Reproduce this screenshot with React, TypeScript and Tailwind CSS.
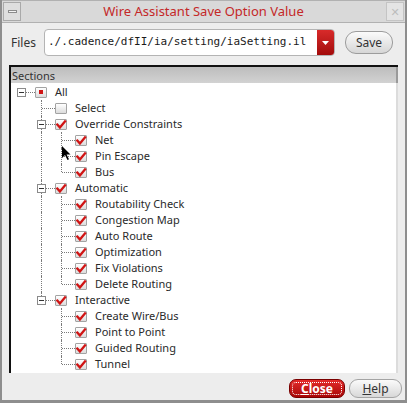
import React from 'react'

type TreeNode = {
  label: string
  state: 'checked' | 'partial' | 'unchecked'
  children?: TreeNode[]
}

type Row = {
  node: TreeNode
  level: number
  guides: boolean[]
  isLast: boolean
}

const c = (label: string): TreeNode => ({ label, state: 'checked' })

const sections: TreeNode = {
  label: 'All',
  state: 'partial',
  children: [
    { label: 'Select', state: 'unchecked' },
    {
      label: 'Override Constraints',
      state: 'checked',
      children: [c('Net'), c('Pin Escape'), c('Bus')],
    },
    {
      label: 'Automatic',
      state: 'checked',
      children: [
        c('Routability Check'),
        c('Congestion Map'),
        c('Auto Route'),
        c('Optimization'),
        c('Fix Violations'),
        c('Delete Routing'),
      ],
    },
    {
      label: 'Interactive',
      state: 'checked',
      children: [
        c('Create Wire/Bus'),
        c('Point to Point'),
        c('Guided Routing'),
        c('Tunnel'),
      ],
    },
  ],
}

// flatten the tree into rows, remembering which ancestor columns need a line
const flatten = (
  node: TreeNode,
  level: number,
  guides: boolean[],
  isLast: boolean,
  out: Row[]
) => {
  out.push({ node, level, guides, isLast })
  const kids = node.children ?? []
  kids.forEach((kid, i) => {
    const childGuides = level === 0 ? [] : [...guides, !isLast]
    flatten(kid, level + 1, level === 0 ? [false] : childGuides, i === kids.length - 1, out)
  })
}

const rows: Row[] = []
flatten(sections, 0, [], true, rows)

const Checkbox = ({ state }: { state: TreeNode['state'] }) => (
  <div className="relative w-[12px] h-[11px] shrink-0 rounded-[1px] border border-[#a3a3a3] bg-gradient-to-b from-[#ffffff] to-[#dcdcdc]">
    {state === 'checked' && (
      <svg
        width="12"
        height="11"
        viewBox="0 0 12 11"
        className="absolute left-[-1px] top-[-1px]"
      >
        <path
          d="M2.3 5.6 L4.9 8.4 L10 2.4"
          fill="none"
          stroke="#d01414"
          strokeWidth="2.3"
          strokeLinecap="square"
        />
      </svg>
    )}
    {state === 'partial' && (
      <div className="absolute left-[3px] top-[2.5px] w-[4px] h-[4px] bg-[#d01414]" />
    )}
  </div>
)

const Expander = () => (
  <div className="absolute left-[6px] top-[4px] w-[9px] h-[9px] bg-white border border-[#8a8a8a] flex items-center justify-center">
    <div className="w-[5px] h-px bg-[#333]" />
  </div>
)

const TreeRow = ({ row }: { row: Row }) => {
  const { node, level, guides, isLast } = row
  const hasKids = !!node.children?.length
  return (
    <div className="flex h-4 items-center">
      {guides.map((g, i) => (
        <div key={i} className="relative w-5 h-4 shrink-0">
          {g && (
            <div className="absolute left-[10px] top-0 h-4 border-l border-dotted border-[#7a7a7a]" />
          )}
        </div>
      ))}
      <div className="relative w-6 h-4 shrink-0">
        {level > 0 && (
          <div
            className={
              isLast
                ? 'absolute left-[10px] top-0 h-2 border-l border-dotted border-[#7a7a7a]'
                : 'absolute left-[10px] top-0 h-4 border-l border-dotted border-[#7a7a7a]'
            }
          />
        )}
        <div className="absolute left-[11px] top-[8px] w-[13px] border-t border-dotted border-[#7a7a7a]" />
        {hasKids && <Expander />}
      </div>
      <Checkbox state={node.state} />
      <span className="ml-2 text-[11px] leading-4 text-[#2a2a2a] whitespace-nowrap">
        {node.label}
      </span>
    </div>
  )
}

export default function App() {
  return (
    <div
      className="relative w-[407px] h-[403px] bg-[#ededed] border-l-2 border-r-2 border-b-[3px] border-[#8e8e8e] flex flex-col overflow-hidden"
      style={{ fontFamily: '"Noto Sans", "DejaVu Sans", sans-serif' }}
    >
      {/* title bar */}
      <div className="h-[23px] shrink-0 flex items-center bg-[#d9d9d9] border-t border-b border-[#b1b1b1] px-px">
        <div className="w-[18px] h-[19px] border border-[#a9a9a9] bg-[#dedede] flex items-center justify-center">
          <div className="w-[9px] h-[3px] border border-[#8c8c8c] bg-[#f4f4f4]" />
        </div>
        <div className="flex-1 text-center text-[13px] text-[#c42828] leading-none">
          Wire Assistant Save Option Value
        </div>
        <div className="w-[18px] h-[19px] border border-[#c4c4c4] bg-[#e4e4e4] flex items-center justify-center text-[11px] text-[#bdbdbd] leading-none">
          ✕
        </div>
      </div>

      {/* files row */}
      <div className="flex items-center pt-[6px] pl-[9px] h-[33px] shrink-0">
        <span className="w-[33px] text-[12px] text-[#333]">Files</span>
        <div className="w-[291px] h-[27px] flex rounded-[4px] border border-[#b4b4b4] bg-white overflow-hidden">
          <div
            className="flex-1 flex items-center pl-[3px] text-[11px] text-[#1a1a1a]"
            style={{ fontFamily: '"DejaVu Sans Mono", monospace' }}
          >
            ./.cadence/dfII/ia/setting/iaSetting.il
          </div>
          <div className="w-[17px] bg-gradient-to-b from-[#d82a2a] to-[#a30a0a] flex items-center justify-center">
            <svg width="7" height="4" viewBox="0 0 7 4">
              <path d="M0 0 H7 L3.5 4 Z" fill="#fff" />
            </svg>
          </div>
        </div>
        <button className="ml-[10px] w-[48px] h-[23px] rounded-[11px] border border-[#9c9c9c] bg-gradient-to-b from-[#fbfbfb] to-[#d6d6d6] text-[12px] text-[#333] leading-none">
          Save
        </button>
      </div>

      {/* sections panel */}
      <div className="mt-[9px] ml-[7px] w-[389px] h-[308px] shrink-0 flex flex-col border-t-2 border-l-2 border-[#111]">
        <div className="h-4 shrink-0 flex items-center pl-px bg-gradient-to-b from-[#bdbdbd] to-[#d2d2d2] border-r-2 border-[#9a9a9a] text-[11px] text-[#333] leading-none">
          Sections
        </div>
        <div className="flex-1 bg-white border-r-2 border-[#dcdcdc] pt-px">
          {rows.map((r, i) => (
            <TreeRow key={i} row={r} />
          ))}
        </div>
      </div>

      {/* bottom buttons */}
      <div className="mt-[6px] flex justify-end gap-[4px] mr-[3px]">
        <button className="w-[56px] h-[19px] rounded-[7px] border border-[#7a0000] bg-gradient-to-b from-[#e42a2a] to-[#a80404] p-[2px]">
          <div className="w-full h-full border border-dotted border-white rounded-[4px] flex items-center justify-center text-[12px] font-bold text-white leading-none">
            <span className="underline decoration-1 underline-offset-1">C</span>lose
          </div>
        </button>
        <button className="w-[53px] h-[19px] rounded-[9px] border border-[#a4a4a4] bg-gradient-to-b from-[#fbfbfb] to-[#d8d8d8] text-[12px] text-[#333] leading-none">
          <span className="underline decoration-1 underline-offset-1">H</span>elp
        </button>
      </div>

      {/* mouse pointer */}
      <svg
        width="10"
        height="16"
        viewBox="0 0 10 16"
        className="absolute left-[59px] top-[145px]"
      >
        <path d="M1 1 L1 13 L4 10 L6.5 15 L8 14.3 L5.6 9.5 L9.5 9.5 Z" fill="#000" />
      </svg>
    </div>
  )
}
